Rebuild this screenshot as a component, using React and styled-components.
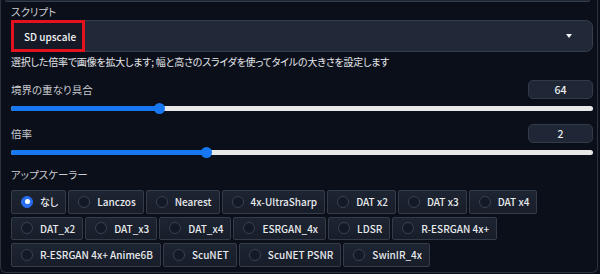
import React from "react";
import styled, { createGlobalStyle } from "styled-components";

const Global = createGlobalStyle`
  html, body { margin: 0; padding: 0; background: #0b0f19; }
  body {
    font-family: "Noto Sans CJK JP", "Noto Sans", sans-serif;
    font-feature-settings: "palt";
    color: #e5e7eb;
    width: 600px;
    height: 274px;
    overflow: hidden;
  }
  * { box-sizing: border-box; }
`;

const Panel = styled.div`
  width: 598px;
  height: 273px;
  border: 1px solid #2c323d;
  border-top: none;
  border-radius: 0 0 6px 6px;
  padding: 0 4px 0 10px;
  display: flex;
  flex-direction: column;
`;

const PrevEdge = styled.div`
  height: 2px;
  margin: 0 3px 2px -6px;
  background: #1f2633;
  border: 1px solid #343c49;
  border-top: none;
  border-radius: 0 0 5px 5px;
`;

const Label = styled.div`
  font-size: 10.5px;
  line-height: 16px;
  color: #c9ccd2;
  margin-top: ${(p) => p.$mt || 0}px;
`;

const Dropdown = styled.div`
  height: 32px;
  background: #212837;
  border: 1px solid #353d4b;
  border-radius: 7px;
  display: flex;
  align-items: center;
  justify-content: space-between;
  padding-right: 20px;
`;

const Chip = styled.div`
  height: 32px;
  margin: -1px 0 -1px -1px;
  border: 3px solid #e3121e;
  background: #151a26;
  padding: 0 6px 0 10px;
  display: flex;
  align-items: center;
  font-size: 10px;
  font-weight: 500;
  color: #f3f4f6;
`;

const Caret = styled.div`
  width: 0;
  height: 0;
  border-left: 3.5px solid transparent;
  border-right: 3.5px solid transparent;
  border-top: 4px solid #f3f4f6;
`;

const Desc = styled.div`
  margin-top: 2px;
  font-size: 10px;
  line-height: 16px;
  color: #e4e6ea;
  letter-spacing: -0.2px;
`;

const LabelRow = styled.div`
  margin-top: 10px;
  height: 19px;
  display: flex;
  align-items: center;
  justify-content: space-between;
  font-size: 10.5px;
  color: #c9ccd2;
`;

const NumberBox = styled.div`
  width: 65px;
  height: 19px;
  background: #1f2635;
  border: 1px solid #323a48;
  border-radius: 5px;
  display: flex;
  align-items: center;
  justify-content: center;
  font-size: 10.5px;
  font-weight: 500;
  color: #eef0f3;
`;

const SliderWrap = styled.div`
  margin-top: 4px;
  height: 11px;
  position: relative;
  display: flex;
  align-items: center;
`;

const Track = styled.div`
  width: 100%;
  height: 5px;
  border-radius: 3px;
  background: #e8e8e8;
  overflow: hidden;
`;

const Fill = styled.div`
  height: 100%;
  background: #1677f0;
`;

const Thumb = styled.div`
  position: absolute;
  top: 0;
  width: 11px;
  height: 11px;
  border-radius: 50%;
  background: #1677f0;
  margin-left: -5.5px;
`;

const Slider = ({ value, min, max }) => {
  const f = (value - min) / (max - min);
  const pos = `calc(5.5px + (100% - 11px) * ${f})`;
  return (
    <SliderWrap>
      <Track>
        <Fill style={{ width: pos }} />
      </Track>
      <Thumb style={{ left: pos }} />
    </SliderWrap>
  );
};

const Group = styled.div`
  margin-top: 7px;
  display: flex;
  flex-wrap: wrap;
  gap: 3px 2px;
`;

const Item = styled.div`
  height: 23.5px;
  display: flex;
  align-items: center;
  gap: 7px;
  padding: 0 7px 0 9px;
  border: 1px solid #343c4a;
  border-radius: 2px;
  background: linear-gradient(#1e2532, #171d29);
  font-size: 10px;
  font-weight: 500;
  color: #e8eaed;
  white-space: nowrap;
`;

const Radio = styled.span`
  width: 12px;
  height: 12px;
  border-radius: 50%;
  flex: none;
  display: flex;
  align-items: center;
  justify-content: center;
  background: ${(p) => (p.$checked ? "#2a6ef0" : "#131926")};
  border: 1px solid ${(p) => (p.$checked ? "#2a6ef0" : "#3a4250")};
  &::after {
    content: "";
    display: ${(p) => (p.$checked ? "block" : "none")};
    width: 5px;
    height: 5px;
    border-radius: 50%;
    background: #ffffff;
  }
`;

const upscalers = [
  "なし",
  "Lanczos",
  "Nearest",
  "4x-UltraSharp",
  "DAT x2",
  "DAT x3",
  "DAT x4",
  "DAT_x2",
  "DAT_x3",
  "DAT_x4",
  "ESRGAN_4x",
  "LDSR",
  "R-ESRGAN 4x+",
  "R-ESRGAN 4x+ Anime6B",
  "ScuNET",
  "ScuNET PSNR",
  "SwinIR_4x",
];

export default function App() {
  return (
    <>
      <Global />
      <Panel>
        <PrevEdge />
        <Label>スクリプト</Label>
        <Dropdown>
          <Chip>SD upscale</Chip>
          <Caret />
        </Dropdown>
        <Desc>選択した倍率で画像を拡大します; 幅と高さのスライダを使ってタイルの大きさを設定します</Desc>
        <LabelRow>
          <span>境界の重なり具合</span>
          <NumberBox>64</NumberBox>
        </LabelRow>
        <Slider value={64} min={0} max={256} />
        <LabelRow>
          <span>倍率</span>
          <NumberBox>2</NumberBox>
        </LabelRow>
        <Slider value={2} min={1} max={4} />
        <Label $mt={9}>アップスケーラー</Label>
        <Group>
          {upscalers.map((u, i) => (
            <Item key={u}>
              <Radio $checked={i === 0} />
              {u}
            </Item>
          ))}
        </Group>
      </Panel>
    </>
  );
}
